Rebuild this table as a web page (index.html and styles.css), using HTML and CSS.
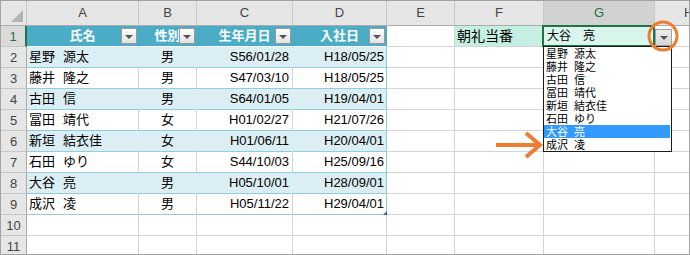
FILE: index.html
```html
<!DOCTYPE html>
<html lang="ja">
<head>
<meta charset="utf-8">
<title>Sheet</title>
<link rel="stylesheet" href="styles.css">
</head>
<body>
<div class="sheet">
  <div class="c ch corner"><span class="tri"></span></div>
  <div class="c ch">A</div>
  <div class="c ch">B</div>
  <div class="c ch">C</div>
  <div class="c ch">D</div>
  <div class="c ch">E</div>
  <div class="c ch">F</div>
  <div class="c ch chsel">G</div>
  <div class="c ch hc hlabel">H</div>

  <div class="c rh rsel">1</div>
  <div class="c th">氏名<span class="fb"><span class="arr"></span></span></div>
  <div class="c th">性別<span class="fb"><span class="arr"></span></span></div>
  <div class="c th">生年月日<span class="fb"><span class="arr"></span></span></div>
  <div class="c th">入社日<span class="fb"><span class="arr"></span></span></div>
  <div class="c"></div>
  <div class="c f1">朝礼当番</div>
  <div class="c g1">大谷　亮</div>
  <div class="c hc"></div>

  <div class="c rh">2</div>
  <div class="c tb na"><span class="fn">星野</span>源太</div>
  <div class="c tb sx">男</div>
  <div class="c tb dc">S56/01/28</div>
  <div class="c tb dd">H18/05/25</div>
  <div class="c"></div><div class="c"></div><div class="c"></div><div class="c hc"></div>

  <div class="c rh">3</div>
  <div class="c tw na"><span class="fn">藤井</span>隆之</div>
  <div class="c tw sx">男</div>
  <div class="c tw dc">S47/03/10</div>
  <div class="c tw dd">H18/05/25</div>
  <div class="c"></div><div class="c"></div><div class="c"></div><div class="c hc"></div>

  <div class="c rh">4</div>
  <div class="c tb na"><span class="fn">古田</span>信</div>
  <div class="c tb sx">男</div>
  <div class="c tb dc">S64/01/05</div>
  <div class="c tb dd">H19/04/01</div>
  <div class="c"></div><div class="c"></div><div class="c"></div><div class="c hc"></div>

  <div class="c rh">5</div>
  <div class="c tw na"><span class="fn">冨田</span>靖代</div>
  <div class="c tw sx">女</div>
  <div class="c tw dc">H01/02/27</div>
  <div class="c tw dd">H21/07/26</div>
  <div class="c"></div><div class="c"></div><div class="c"></div><div class="c hc"></div>

  <div class="c rh">6</div>
  <div class="c tb na"><span class="fn">新垣</span>結衣佳</div>
  <div class="c tb sx">女</div>
  <div class="c tb dc">H01/06/11</div>
  <div class="c tb dd">H20/04/01</div>
  <div class="c"></div><div class="c"></div><div class="c"></div><div class="c hc"></div>

  <div class="c rh">7</div>
  <div class="c tw na"><span class="fn">石田</span>ゆり</div>
  <div class="c tw sx">女</div>
  <div class="c tw dc">S44/10/03</div>
  <div class="c tw dd">H25/09/16</div>
  <div class="c"></div><div class="c"></div><div class="c"></div><div class="c hc"></div>

  <div class="c rh">8</div>
  <div class="c tb na"><span class="fn">大谷</span>亮</div>
  <div class="c tb sx">男</div>
  <div class="c tb dc">H05/10/01</div>
  <div class="c tb dd">H28/09/01</div>
  <div class="c"></div><div class="c"></div><div class="c"></div><div class="c hc"></div>

  <div class="c rh">9</div>
  <div class="c tw na"><span class="fn">成沢</span>凌</div>
  <div class="c tw sx">男</div>
  <div class="c tw dc">H05/11/22</div>
  <div class="c tw dd">H29/04/01</div>
  <div class="c"></div><div class="c"></div><div class="c"></div><div class="c hc"></div>

  <div class="c rh">10</div>
  <div class="c"></div><div class="c"></div><div class="c"></div><div class="c"></div>
  <div class="c"></div><div class="c"></div><div class="c"></div><div class="c hc"></div>

  <div class="c rh lr">11</div>
  <div class="c lr"></div><div class="c lr"></div><div class="c lr"></div><div class="c lr"></div>
  <div class="c lr"></div><div class="c lr"></div><div class="c lr"></div><div class="c hc lr"></div>

  <div class="handle"></div>
  <div class="selbox"></div>
  <div class="ddbtn"><span class="arr"></span></div>
  <ul class="ddlist">
    <li><span class="lfn">星野</span>源太</li>
    <li><span class="lfn">藤井</span>隆之</li>
    <li><span class="lfn">古田</span>信</li>
    <li><span class="lfn">冨田</span>靖代</li>
    <li><span class="lfn">新垣</span>結衣佳</li>
    <li><span class="lfn">石田</span>ゆり</li>
    <li class="hl"><span class="lfn">大谷</span>亮</li>
    <li><span class="lfn">成沢</span>凌</li>
  </ul>
  <svg class="ring" width="34" height="34" viewBox="0 0 34 34"><circle cx="17" cy="17" r="14" fill="none" stroke="#ed7d31" stroke-width="3"/></svg>
  <svg class="pointer" width="50" height="32" viewBox="0 0 50 32"><line x1="2" y1="15" x2="45" y2="15" stroke="#ed7d31" stroke-width="4"/><polyline points="32,3 46,15 32,27" fill="none" stroke="#ed7d31" stroke-width="4"/></svg>
</div>
</body>
</html>
```

FILE: styles.css
```css
body {
  margin: 0;
  background: #fff;
}

.sheet {
  position: relative;
  width: 690px;
  height: 255px;
  box-sizing: border-box;
  border: 1px solid #a3a3a3;
  display: grid;
  grid-template-columns: 26px 112px 58px 96px 94px 68px 89px 111px 34px;
  grid-template-rows: 25px repeat(10, 21px) 18px;
  overflow: hidden;
  background: #fff;
  font-family: "Liberation Sans", "Noto Sans CJK JP", sans-serif;
}

.c {
  box-sizing: border-box;
  border-right: 1px solid #d4d4d4;
  border-bottom: 1px solid #d4d4d4;
  font-size: 13px;
  line-height: 20px;
  padding: 0 2px;
  white-space: nowrap;
  overflow: hidden;
  color: #000;
}

.hc { border-right: none; }
.lr { border-bottom: none; }

/* headers */
.ch {
  background: #e6e6e6;
  border-right-color: #c8c8c8;
  border-bottom-color: #ababab;
  text-align: center;
  line-height: 24px;
  color: #444;
  font-size: 13px;
}
.chsel {
  background: #d2d2d2;
  color: #217346;
}
.hlabel {
  text-align: left;
  padding-left: 29px;
}
.corner {
  display: flex;
  justify-content: flex-end;
  align-items: flex-end;
  padding: 0 3px 3px 0;
}
.tri {
  width: 0;
  height: 0;
  border-left: 12px solid transparent;
  border-bottom: 12px solid #b4b4b4;
}

.rh {
  background: #e6e6e6;
  border-right-color: #ababab;
  border-bottom-color: #c8c8c8;
  text-align: center;
  color: #444;
  padding: 0;
  line-height: 21px;
}
.rsel {
  background: #dadada;
  color: #217346;
  border-right: 2px solid #217346;
}

/* table */
.th {
  position: relative;
  background: #4bacc6;
  color: #fff;
  font-weight: bold;
  text-align: center;
  border-right-color: #4bacc6;
  border-bottom-color: #ffffff;
  overflow: visible;
}
.fb {
  position: absolute;
  right: 1px;
  top: 2px;
  width: 16px;
  height: 16px;
  box-sizing: border-box;
  border: 1px solid #9a9a9a;
  background: linear-gradient(#ffffff, #e2e2e2);
  display: flex;
  align-items: center;
  justify-content: center;
}
.arr {
  width: 0;
  height: 0;
  border-left: 4px solid transparent;
  border-right: 4px solid transparent;
  border-top: 4px solid #555;
  margin-top: 1px;
}

.tb {
  background: #daeef3;
  border-right-color: #daeef3;
  border-bottom-color: #92cddc;
}
.tw {
  border-bottom-color: #92cddc;
}
.dd {
  border-right-color: #92cddc;
  text-align: right;
  padding-right: 2px;
}
.dc {
  text-align: right;
  padding-right: 3px;
}
.sx { text-align: center; }
.na { padding-left: 2px; }
.fn { margin-right: 8px; }

.f1 {
  background: #c5efe0;
  font-size: 14px;
  padding-left: 2px;
}
.g1 {
  background: #d9f5ec;
  font-size: 12px;
  padding-left: 3px;
}

/* overlays */
.handle {
  position: absolute;
  left: 382px;
  top: 210px;
  width: 0;
  height: 0;
  border-left: 4px solid transparent;
  border-bottom: 4px solid #3c56b4;
}
.selbox {
  position: absolute;
  left: 541px;
  top: 24px;
  width: 113px;
  height: 22px;
  box-sizing: border-box;
  border: 2px solid #217346;
}
.ddbtn {
  position: absolute;
  left: 654px;
  top: 28px;
  width: 17px;
  height: 17px;
  box-sizing: border-box;
  border: 1px solid #a0a0a0;
  background: linear-gradient(#ececec, #d6d6d6);
  display: flex;
  align-items: center;
  justify-content: center;
}
.ddlist {
  position: absolute;
  left: 542px;
  top: 45px;
  width: 129px;
  height: 106px;
  box-sizing: border-box;
  margin: 0;
  padding: 0 1px 0 0;
  list-style: none;
  border: 1px solid #1a1a1a;
  background: #fff;
  font-family: "Noto Sans CJK JP", sans-serif;
  font-size: 11px;
  line-height: 13px;
}
.ddlist li {
  height: 13px;
  padding-left: 2px;
  white-space: nowrap;
  color: #000;
}
.ddlist li.hl {
  background: #3399ff;
  color: #fff;
}
.lfn { margin-right: 6px; }

.ring {
  position: absolute;
  left: 645px;
  top: 18px;
}
.pointer {
  position: absolute;
  left: 493px;
  top: 129px;
}
```
